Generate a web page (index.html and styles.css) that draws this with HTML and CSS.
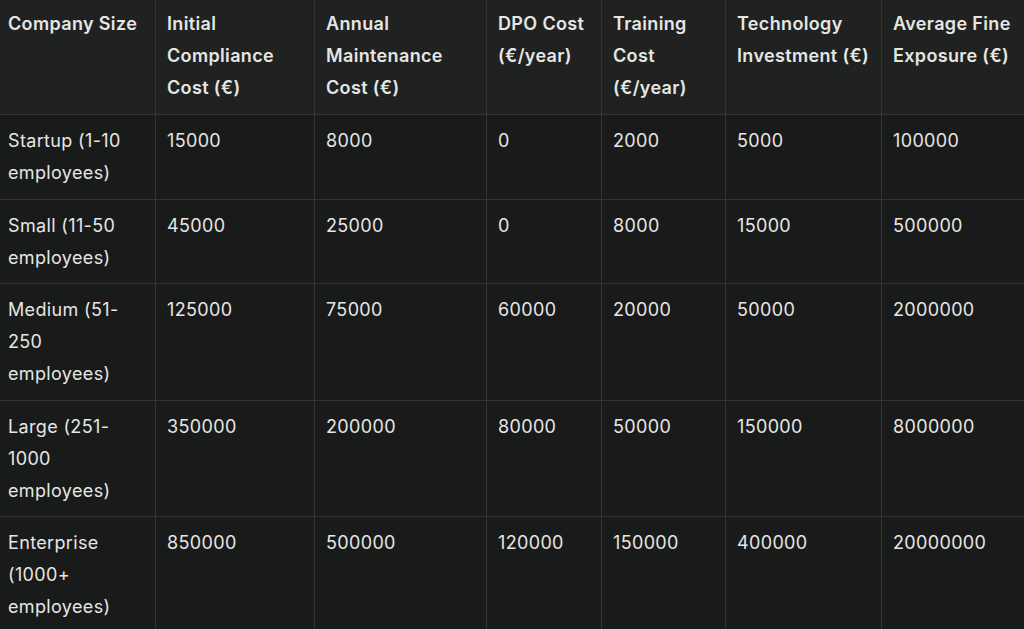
FILE: index.html
```html
<!DOCTYPE html>
<html lang="en">
<head>
<meta charset="utf-8">
<title>GDPR Compliance Costs</title>
<link rel="stylesheet" href="styles.css">
</head>
<body>
<div class="wrap">
<table class="costs">
<colgroup>
<col class="c1"><col class="c2"><col class="c3"><col class="c4"><col class="c5"><col class="c6"><col class="c7">
</colgroup>
<thead>
<tr>
<th>Company Size</th>
<th>Initial Compliance Cost (€)</th>
<th>Annual Maintenance Cost (€)</th>
<th>DPO Cost (€/year)</th>
<th>Training Cost (€/year)</th>
<th>Technology Investment (€)</th>
<th>Average Fine Exposure (€)</th>
</tr>
</thead>
<tbody>
<tr><td>Startup (1-10 employees)</td><td>15000</td><td>8000</td><td>0</td><td>2000</td><td>5000</td><td>100000</td></tr>
<tr><td>Small (11-50 employees)</td><td>45000</td><td>25000</td><td>0</td><td>8000</td><td>15000</td><td>500000</td></tr>
<tr><td>Medium (51-250 employees)</td><td>125000</td><td>75000</td><td>60000</td><td>20000</td><td>50000</td><td>2000000</td></tr>
<tr><td>Large (251-1000 employees)</td><td>350000</td><td>200000</td><td>80000</td><td>50000</td><td>150000</td><td>8000000</td></tr>
<tr><td>Enterprise (1000+ employees)</td><td>850000</td><td>500000</td><td>120000</td><td>150000</td><td>400000</td><td>20000000</td></tr>
</tbody>
</table>
</div>
</body>
</html>
```
FILE: styles.css
```css
html, body {
  margin: 0;
  padding: 0;
  background: #191a1a;
  overflow: hidden;
}
.wrap {
  margin: -3px 0 0 -4px;
}
.costs {
  border-collapse: collapse;
  table-layout: fixed;
  width: 1040px;
  font-family: Inter, "Liberation Sans", sans-serif;
  font-size: 18px;
  letter-spacing: 0.35px;
  line-height: 32px;
  color: #e6e6e3;
}
.c1 { width: 159px; }
.c2 { width: 159px; }
.c3 { width: 172px; }
.c4 { width: 115px; }
.c5 { width: 124px; }
.c6 { width: 156px; }
.c7 { width: 155px; }
.costs th, .costs td {
  border: 1px solid #333535;
  padding: 10px 11px 9.5px 11px;
  text-align: left;
  vertical-align: top;
}
.costs th {
  background: #202222;
  font-weight: 600;
  padding-bottom: 10px;
}
.costs td {
  background: #191a1a;
  font-weight: 400;
}
```
